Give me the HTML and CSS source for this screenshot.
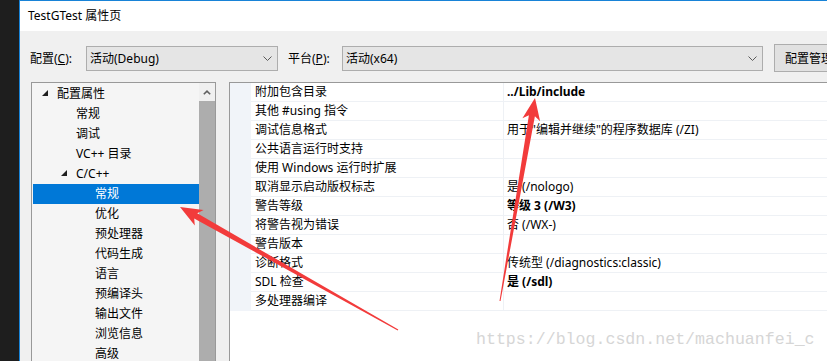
FILE: index.html
```html
<!DOCTYPE html>
<html lang="zh-CN">
<head>
  <meta charset="UTF-8">
  <meta name="viewport" content="width=device-width, initial-scale=1.0">
  <title>TestGTest 属性页</title>
  <link rel="stylesheet" href="styles.css">
</head>
<body>
  <div class="desk">
    <div class="strip"></div>

    <div class="window">
      <div class="titlebar">TestGTest 属性页</div>

      <div class="content">
        <!-- Configuration / platform row -->
        <div class="config-row">
          <span class="lbl lbl-config">配置(<u>C</u>):</span>
          <div class="combo combo-config">
            <span>活动(Debug)</span>
            <svg class="chevron" width="9" height="5" viewBox="0 0 9 5"><polyline points="0.5,0.5 4.5,4.5 8.5,0.5" fill="none" stroke="#5a5a5a" stroke-width="1"/></svg>
          </div>
          <span class="lbl lbl-platform">平台(<u>P</u>):</span>
          <div class="combo combo-platform">
            <span>活动(x64)</span>
            <svg class="chevron" width="9" height="5" viewBox="0 0 9 5"><polyline points="0.5,0.5 4.5,4.5 8.5,0.5" fill="none" stroke="#5a5a5a" stroke-width="1"/></svg>
          </div>
          <button class="btn">配置管理器(<u>O</u>)...</button>
        </div>

        <div class="panes">
          <!-- Left tree -->
          <div class="tree">
            <ul class="tree-items">
              <li class="item l0 open"><span class="twisty"><svg width="6" height="6" viewBox="0 0 6 6"><polygon points="6,0 6,6 0,6" fill="#1e1e1e"/></svg></span>配置属性</li>
              <li class="item l1">常规</li>
              <li class="item l1">调试</li>
              <li class="item l1">VC++ 目录</li>
              <li class="item l1 open"><span class="twisty"><svg width="6" height="6" viewBox="0 0 6 6"><polygon points="6,0 6,6 0,6" fill="#1e1e1e"/></svg></span>C/C++</li>
              <li class="item l2 selected">常规</li>
              <li class="item l2">优化</li>
              <li class="item l2">预处理器</li>
              <li class="item l2">代码生成</li>
              <li class="item l2">语言</li>
              <li class="item l2">预编译头</li>
              <li class="item l2">输出文件</li>
              <li class="item l2">浏览信息</li>
              <li class="item l2">高级</li>
            </ul>
            <div class="scrollbar">
              <div class="scroll-up">
                <svg width="8" height="5" viewBox="0 0 8 5"><polyline points="0.8,4.3 4,1.2 7.2,4.3" fill="none" stroke="#606060" stroke-width="1.6"/></svg>
              </div>
              <div class="thumb"></div>
            </div>
          </div>

          <!-- Right property grid -->
          <div class="grid">
            <div class="prop-row"><div class="gutter"></div><div class="name">附加包含目录</div><div class="value bold">../Lib/include</div></div>
            <div class="prop-row"><div class="gutter"></div><div class="name">其他 #using 指令</div><div class="value"></div></div>
            <div class="prop-row"><div class="gutter"></div><div class="name">调试信息格式</div><div class="value">用于"编辑并继续"的程序数据库 (/ZI)</div></div>
            <div class="prop-row"><div class="gutter"></div><div class="name">公共语言运行时支持</div><div class="value"></div></div>
            <div class="prop-row"><div class="gutter"></div><div class="name">使用 Windows 运行时扩展</div><div class="value"></div></div>
            <div class="prop-row"><div class="gutter"></div><div class="name">取消显示启动版权标志</div><div class="value">是 (/nologo)</div></div>
            <div class="prop-row"><div class="gutter"></div><div class="name">警告等级</div><div class="value bold">等级 3 (/W3)</div></div>
            <div class="prop-row"><div class="gutter"></div><div class="name">将警告视为错误</div><div class="value">否 (/WX-)</div></div>
            <div class="prop-row"><div class="gutter"></div><div class="name">警告版本</div><div class="value"></div></div>
            <div class="prop-row"><div class="gutter"></div><div class="name">诊断格式</div><div class="value">传统型 (/diagnostics:classic)</div></div>
            <div class="prop-row"><div class="gutter"></div><div class="name">SDL 检查</div><div class="value bold">是 (/sdl)</div></div>
            <div class="prop-row"><div class="gutter"></div><div class="name">多处理器编译</div><div class="value"></div></div>
          </div>
        </div>
      </div>
    </div>
  </div>

  <!-- Annotation arrows drawn over the screenshot -->
  <svg class="arrows" width="827" height="361" viewBox="0 0 827 361">
    <polygon fill="#f23b3b" points="180,207 203.6,210 197.2,213.3 398.3,329.6 397.7,330.4 194.2,218.5 194.8,225.6"/>
    <polygon fill="#f23b3b" points="535,98 540.1,121.2 534.9,116.2 500.5,301.1 499.5,300.9 528.9,115.2 522.4,118.2"/>
  </svg>

  <div class="watermark">https://blog.csdn.net/machuanfei_c</div>
</body>
</html>
```

FILE: styles.css
```css
* {
  box-sizing: border-box;
}
html, body {
  margin: 0;
  padding: 0;
}
body {
  position: relative;
  width: 827px;
  height: 361px;
  overflow: hidden;
  font-family: "Noto Sans", "Noto Sans CJK SC", sans-serif;
  font-size: 12px;
  color: #000;
  background: #1e1e1e;
}
.desk {
  display: flex;
  height: 361px;
}
.strip {
  width: 19px;
  flex: none;
  background: #1e1e1e;
}
.window {
  flex: 1;
  min-width: 0;
  display: flex;
  flex-direction: column;
  overflow: hidden;
  background: #f0f0f0;
  border-left: 1px solid #1883d7;
  border-top: 1px solid #1883d7;
}
.titlebar {
  flex: none;
  height: 30px;
  line-height: 30px;
  padding-left: 8px;
  background: #fff;
}
.content {
  flex: 1;
  display: flex;
  flex-direction: column;
  min-height: 0;
}

/* config row */
.config-row {
  flex: none;
  display: flex;
  align-items: center;
  height: 28px;
  margin-top: 13px;
  padding-left: 10px;
  white-space: nowrap;
}
.lbl {
  flex: none;
}
.lbl-config {
  width: 56px;
}
.lbl-platform {
  width: 54px;
  margin-left: 10px;
}
.combo {
  flex: none;
  display: flex;
  align-items: center;
  justify-content: space-between;
  height: 25px;
  padding: 0 5px 0 3px;
  background: #e5e5e5;
  border: 1px solid #adadad;
}
.combo-config {
  width: 192px;
}
.combo-platform {
  width: 421px;
}
.btn {
  flex: none;
  width: 110px;
  height: 28px;
  margin-left: 11px;
  padding: 0 0 0 10px;
  text-align: left;
  font: inherit;
  color: #000;
  background: #e1e1e1;
  border: 1px solid #adadad;
}

/* panes */
.panes {
  flex: 1;
  display: flex;
  gap: 13px;
  margin-top: 10px;
  padding-left: 11px;
  min-height: 0;
}
.tree {
  flex: none;
  display: flex;
  width: 185px;
  background: #f5f5f5;
  border: 1px solid #999;
  border-bottom: none;
}
.tree-items {
  flex: 1;
  list-style: none;
  margin: 0;
  padding: 1px 0 0 1px;
}
.item {
  display: flex;
  align-items: center;
  height: 20px;
  padding-bottom: 2px;
  white-space: nowrap;
}
.item.l0 {
  padding-left: 24px;
}
.item.l1 {
  padding-left: 43px;
}
.item.l2 {
  padding-left: 62px;
}
.item.l0.open {
  padding-left: 9px;
}
.item.l1.open {
  padding-left: 28px;
}
.twisty {
  display: flex;
  align-items: center;
  width: 15px;
  height: 18px;
  padding-bottom: 1px;
}
.item.selected {
  background: #0078d7;
  color: #fff;
}
.scrollbar {
  flex: none;
  display: flex;
  flex-direction: column;
  width: 16px;
  background: #f0f0f0;
}
.scroll-up {
  flex: none;
  display: flex;
  align-items: center;
  justify-content: center;
  height: 18px;
  padding-right: 1px;
}
.thumb {
  flex: 1;
  background: #adadad;
}

/* property grid */
.grid {
  flex: 1;
  min-width: 0;
  background: #fff;
  border-left: 1px solid #999;
  border-top: 1px solid #999;
}
.prop-row {
  display: flex;
  height: 19px;
  line-height: 18px;
  white-space: nowrap;
}
.gutter {
  flex: none;
  width: 21px;
  background: #f1f4f9;
}
.name {
  flex: none;
  width: 253px;
  padding-left: 4px;
  border-right: 1px solid #eef1f5;
  border-bottom: 1px solid #eef1f5;
}
.value {
  flex: 1;
  padding-left: 3px;
  border-bottom: 1px solid #eef1f5;
}
.value.bold {
  font-weight: bold;
}

/* overlays */
.arrows {
  position: absolute;
  left: 0;
  top: 0;
  pointer-events: none;
}
.watermark {
  position: absolute;
  left: 476px;
  top: 331px;
  font-family: "Liberation Mono", monospace;
  font-size: 16.6px;
  line-height: 17px;
  color: #d6d6d6;
  white-space: nowrap;
}
```
